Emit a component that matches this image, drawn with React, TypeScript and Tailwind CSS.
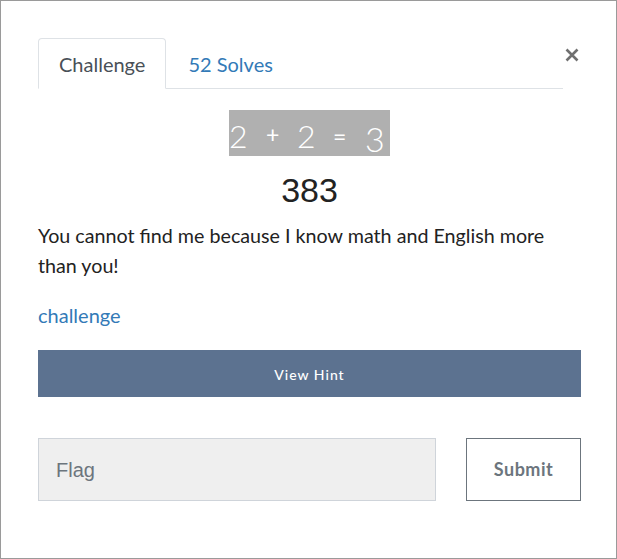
import React from "react";

export default function App() {
  return (
    <div className="w-[617px] h-[559px] border border-[#9a9a9a] bg-white box-border font-['Lato',sans-serif] text-[#212529]">
      <div className="pl-[37px] pr-[35px] pt-[37px] flex flex-col">
        {/* header */}
        <div className="flex items-start">
          <div className="flex-1 flex border-b border-[#dee2e6] h-[51px]">
            <div className="h-[51px] px-[20px] border border-[#dee2e6] border-b-white rounded-t-[4px] bg-white flex items-center text-[20px] text-[#495057] -mb-px">
              Challenge
            </div>
            <div className="h-[51px] px-[22px] flex items-center text-[20px] text-[#337ab7] -mb-px">
              52 Solves
            </div>
          </div>
          <button className="w-[18px] mt-[8px] flex justify-end">
            <svg width="14" height="14" viewBox="0 0 14 14" className="mt-[2px] mr-[2px]">
              <path d="M1.5 1.5 L12.5 12.5 M12.5 1.5 L1.5 12.5" stroke="#707070" strokeWidth="2.6" />
            </svg>
          </button>
        </div>

        {/* captcha image */}
        <div className="flex justify-center mt-[21px]">
          <svg width="161" height="46" viewBox="0 0 161 46">
            <rect x="0" y="0" width="161" height="46" fill="#b0b0b0" />
            <g fill="#ffffff" fontFamily="'Lato', sans-serif" fontWeight="300">
              <text x="0" y="38" fontSize="32">2</text>
              <text x="68" y="38" fontSize="32">2</text>
              <text x="136" y="42" fontSize="34">3</text>
            </g>
            <g fill="#ffffff" fontFamily="'Lato', sans-serif" fontWeight="400">
              <text x="37" y="33" fontSize="23">+</text>
              <text x="104" y="35" fontSize="23">=</text>
            </g>
          </svg>
        </div>

        {/* number */}
        <div className="text-center mt-[14px] text-[34px] leading-[40px] font-['Liberation_Sans',sans-serif] text-[#222]">
          383
        </div>

        {/* description */}
        <p className="mt-[11px] text-[19.7px] leading-[30px] text-[#222]">
          You cannot find me because I know math and English more than you!
        </p>

        <div className="mt-[19px] text-[20px] leading-[30px] text-[#337ab7]">challenge</div>

        {/* hint */}
        <button className="mt-[20px] h-[47px] w-full bg-[#5c7290] text-white text-[14px] tracking-[1px] font-medium pt-px">
          View Hint
        </button>

        {/* form */}
        <div className="mt-[41px] flex gap-[30px]">
          <div className="w-[398px] h-[63px] bg-[#efefef] border border-[#cfd4da] flex items-center px-[17px]">
            <span className="text-[20px] text-[#6c757d] font-['Liberation_Sans',sans-serif]">Flag</span>
          </div>
          <button className="w-[115px] h-[63px] border border-[#6c757d] bg-white text-[#6c757d] text-[18px] font-bold tracking-[0.5px]">
            Submit
          </button>
        </div>
      </div>
    </div>
  );
}
